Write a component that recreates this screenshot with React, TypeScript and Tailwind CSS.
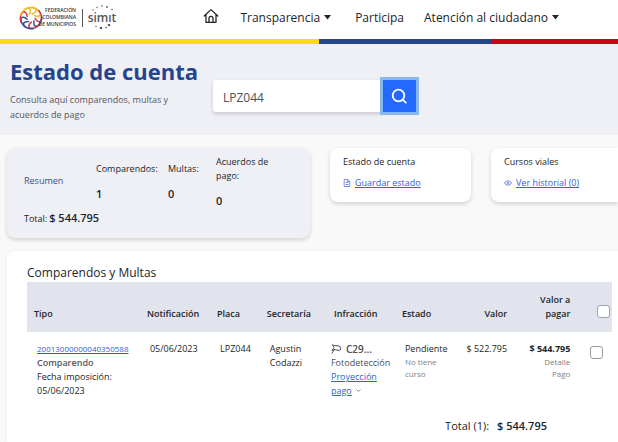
import type { ReactNode } from "react";

function FederationLogo() {
  const arms = ["#f3b91f", "#f3b91f", "#d4373f", "#38509c", "#d4373f", "#38509c", "#38509c", "#d4373f", "#f3b91f"];
  return (
    <svg viewBox="-12 -12 24 24" className="size-[24px] shrink-0" fill="none" strokeWidth="1.5" strokeLinecap="round" aria-hidden="true">
      {arms.map((c, i) => (
        <path key={i} d="M1 -4 C4 -5 6.500 -7.500 4 -9.300 C1.500 -11 -3 -11 -6 -9" stroke={c} transform={`rotate(${i * 40})`} />
      ))}
    </svg>
  );
}

function SimitLogo() {
  return (
    <span className="flex flex-col items-center leading-none text-[#55565a]">
      <svg viewBox="0 0 30 6" className="h-[6px] w-[30px]" fill="currentColor" aria-hidden="true">
        <circle cx="6" cy="5" r=".7" />
        <circle cx="10" cy="2.5" r=".7" />
        <circle cx="15" cy="1" r=".8" />
        <circle cx="20" cy="2" r=".9" />
        <circle cx="25" cy="4.5" r=".8" />
      </svg>
      <span className="text-[12px] leading-[13px] font-semibold">simıt</span>
      <svg viewBox="0 0 30 6" className="h-[6px] w-[30px]" fill="currentColor" aria-hidden="true">
        <circle cx="9" cy="2.5" r=".7" />
        <circle cx="14" cy="4" r="1.3" />
        <circle cx="19" cy="3.5" r=".8" />
        <circle cx="22" cy="1" r="1.2" />
      </svg>
    </span>
  );
}

function Caret() {
  return (
    <svg viewBox="0 0 7 5" className="h-[5px] w-[7px]" fill="#212529" aria-hidden="true">
      <path d="M0 0h7L3.5 4.5z" />
    </svg>
  );
}

function SideCard({ title, link, icon, className }: { title: string; link: string; icon: ReactNode; className: string }) {
  return (
    <section className={`h-[54px] bg-white px-[13px] pt-[7px] shadow-[0_2px_4px_rgba(0,0,0,0.16)] ${className}`}>
      <h2 className="text-[9px] leading-[14px]">{title}</h2>
      <a href="#" className="mt-[7px] flex items-center gap-1 text-[#2f62d6]">
        {icon}
        <span className="text-[9px] leading-[14px] underline">{link}</span>
      </a>
    </section>
  );
}

const stats = [
  { label: "Comparendos:", value: "1", width: "w-[72px]" },
  { label: "Multas:", value: "0", width: "w-[48px]" },
  { label: "Acuerdos de pago:", value: "0", width: "w-[64px]" },
];

export default function App() {
  return (
    <div className="min-h-screen overflow-hidden bg-[#f9f9f9] font-['Open_Sans','Noto_Sans',sans-serif] text-[#212529]">
      <header className="flex h-[39px] items-center bg-white pb-1 pl-[19px]">
        <a href="#" className="flex items-center" aria-label="Simit">
          <FederationLogo />
          <span className="flex w-[33px] flex-col items-end text-[5px] leading-[7px] font-semibold whitespace-nowrap text-[#333]">
            <span>FEDERACIÓN</span>
            <span>COLOMBIANA</span>
            <span>DE MUNICIPIOS</span>
          </span>
          <span className="mr-1 ml-[6px] h-[18px] w-px bg-[#55565a]" />
          <SimitLogo />
        </a>
        <nav className="ml-auto flex items-center pb-1 text-[12px] leading-4">
          <a href="#" aria-label="Inicio">
            <svg viewBox="0 0 16 16" className="size-[16px]" fill="none" stroke="#212529" strokeWidth="1.3" strokeLinejoin="round" strokeLinecap="round" aria-hidden="true">
              <path d="M1.200 8 8 1.600 14.800 8M3 6.800V14.300h10V6.800M6 14v-3.700a2 2 0 0 1 4 0V14" />
            </svg>
          </a>
          <button className="ml-[21px] flex items-center gap-1 pt-[4px]">Transparencia <Caret /></button>
          <a href="#" className="ml-6 pt-[4px]">Participa</a>
          <button className="mr-[59px] ml-5 flex items-center gap-1 pt-[4px]">Atención al ciudadano <Caret /></button>
        </nav>
      </header>
      <div className="flex h-[5px]">
        <div className="flex-[319] bg-[#f9dc16]" />
        <div className="flex-[173] bg-[#25458a]" />
        <div className="flex-[126] bg-[#cb0517]" />
      </div>

      <section className="flex h-[91px] items-start bg-[#efeff6] pl-[10px]">
        <div className="w-[203px] pt-[13px]">
          <h1 className="text-[22px] leading-7 font-bold text-[#24458c]">Estado de cuenta</h1>
          <p className="mt-[7px] w-[180px] text-[9px] leading-[15px] text-[#55565c]">Consulta aquí comparendos, multas y acuerdos de pago</p>
        </div>
        <form className="mt-9 flex" onSubmit={(e) => e.preventDefault()}>
          <input
            aria-label="Placa"
            defaultValue="LPZ044"
            className="h-8 w-[170px] rounded-l-[3px] bg-white px-[10px] pt-[3px] text-[12px] text-[#4b4f56] shadow-[0_2px_4px_rgba(0,0,0,0.16)] outline-none"
          />
          <button aria-label="Buscar" className="flex h-8 w-[33px] items-center justify-center bg-[#2468ff] pr-[2px] ring-[3px] ring-[#86b7f0]">
            <svg viewBox="0 0 16 16" className="size-[16px]" fill="none" stroke="white" strokeWidth="1.8" strokeLinecap="round" aria-hidden="true">
              <circle cx="7.500" cy="7.500" r="5.800" />
              <path d="m11.800 11.800 3 2.800" />
            </svg>
          </button>
        </form>
      </section>

      <main className="pl-[7px]">
        <div className="grid grid-cols-[303fr_141fr_127fr] items-start gap-5 pt-[13px]">
          <section className="h-[90px] rounded-lg bg-[#efeff6] px-[17px] pt-1 shadow-[0_2px_4px_rgba(0,0,0,0.16)]">
            <div className="flex h-[58px] items-center">
              <h2 className="w-[72px] text-[9px] leading-[14px] text-[#34508f]">Resumen</h2>
              <dl className="flex items-center">
                {stats.map((s) => (
                  <div key={s.label} className={s.width}>
                    <dt className="text-[9px] leading-[14px]">{s.label}</dt>
                    <dd className="mt-[10px] text-[11px] leading-[15px] font-semibold">{s.value}</dd>
                  </div>
                ))}
              </dl>
            </div>
            <p className="flex items-baseline gap-[2px] text-[9px] leading-4">
              Total: <strong className="text-[11px] font-semibold">$ 544.795</strong>
            </p>
          </section>
          <SideCard
            title="Estado de cuenta"
            link="Guardar estado"
            className="rounded-lg"
            icon={
              <svg viewBox="0 0 8 8" className="size-2" fill="none" stroke="#5878d8" strokeWidth=".8" aria-hidden="true">
                <path d="M1.200.5h3.600l2 2v5H1.200zM2.500 3.500h3M2.500 5.500h3M4.600.5v2.200h2.200" />
              </svg>
            }
          />
          <SideCard
            title="Cursos viales"
            link="Ver historial (0)"
            className="rounded-l-lg"
            icon={
              <svg viewBox="0 0 8 8" className="size-2" fill="none" stroke="#5878d8" strokeWidth=".8" aria-hidden="true">
                <path d="M.4 4C2 1.200 6 1.200 7.600 4 6 6.800 2 6.800.4 4z" />
                <circle cx="4" cy="4" r="1" />
              </svg>
            }
          />
        </div>

        <section className="mt-[13px] min-h-[191px] rounded-tl-lg bg-white pt-[13px] pr-[6px] pl-5 shadow-[0_0_4px_rgba(0,0,0,0.06)]">
          <h2 className="h-[18px] text-[12px] leading-[18px]">Comparendos y Multas</h2>
          <table className="w-full table-fixed text-[9px] leading-[14px]">
            <colgroup>
              <col className="w-[19.3%]" />
              <col className="w-[12%]" />
              <col className="w-[8.5%]" />
              <col className="w-[10.8%]" />
              <col className="w-[12.3%]" />
              <col className="w-[10.6%]" />
              <col className="w-[10.3%]" />
              <col className="w-[10.8%]" />
              <col />
            </colgroup>
            <thead>
              <tr className="h-[50px] bg-[#e1e4ec] text-left align-bottom *:pb-[11px] *:font-semibold">
                <th className="pl-[7px]">Tipo</th>
                <th className="pl-[7px]">Notificación</th>
                <th className="pl-[7px]">Placa</th>
                <th className="pl-[7px]">Secretaría</th>
                <th className="pl-[11px]">Infracción</th>
                <th className="pl-[7px]">Estado</th>
                <th className="pr-[10px] text-right">Valor</th>
                <th className="pr-[10px] pl-3 text-right">Valor a pagar</th>
                <th className="pr-[2px]">
                  <input type="checkbox" aria-label="Seleccionar todos" className="mb-[3px] ml-auto block size-[13px] appearance-none rounded-[3px] border border-[#9aa3ae] bg-white" />
                </th>
              </tr>
            </thead>
            <tbody>
              <tr className="align-top *:pt-[10px]">
                <td className="pl-[10px] whitespace-nowrap">
                  <a href="#" className="text-[8px] text-[#2f62d6] underline">20013000000040350588</a>
                  <strong className="block font-semibold text-[#55585e]">Comparendo</strong>
                  Fecha imposición:
                  <br />
                  05/06/2023
                </td>
                <td className="pl-[10px]">05/06/2023</td>
                <td className="pl-[10px]">LPZ044</td>
                <td className="pl-[10px]">Agustin Codazzi</td>
                <td className="pl-2">
                  <span className="flex items-center gap-1 text-[10px] font-semibold text-[#4b4f56]">
                    <svg viewBox="0 0 11 10" className="h-[10px] w-[11px]" fill="none" stroke="#4b4f56" strokeWidth="1" strokeLinejoin="round" strokeLinecap="round" aria-hidden="true">
                      <path d="M1.500 1 3.500 1.500 8.500 2 10 5 8 6.500 3.500 5.500 1 6.500 3 3.500zM3.500 5.500 1 9.300" />
                    </svg>
                    C29...
                  </span>
                  <span className="block text-[#4b4f56]">Fotodetección</span>
                  <a href="#" className="text-[#2f62d6]">
                    <span className="underline">Proyección<br />pago</span>
                    <svg viewBox="0 0 5 3" className="mb-[2px] ml-1 inline h-[3px] w-[5px]" fill="none" stroke="#6b7280" strokeWidth=".8" aria-hidden="true">
                      <path d="m.5.5 2 2 2-2" />
                    </svg>
                  </a>
                </td>
                <td className="pl-[10px]">
                  Pendiente
                  <span className="block w-9 text-[8px] leading-3 text-[#7b7f86]">No tiene curso</span>
                </td>
                <td className="pr-[10px] text-right whitespace-nowrap">$ 522.795</td>
                <td className="pr-[10px] text-right whitespace-nowrap">
                  <strong className="font-bold">$ 544.795</strong>
                  <span className="block text-[8px] leading-3 text-[#7b7f86]">Detalle<br />Pago</span>
                </td>
                <td className="pr-[9px]">
                  <input type="checkbox" aria-label="Seleccionar comparendo" className="mt-1 ml-auto block size-[13px] appearance-none rounded-[3px] border border-[#9a9a9a] bg-white" />
                </td>
              </tr>
            </tbody>
          </table>
          <p className="mt-5 flex items-baseline justify-end gap-2 pr-[65px] text-[11px] leading-4">
            Total (1): <strong className="font-semibold">$ 544.795</strong>
          </p>
        </section>
      </main>
    </div>
  );
}
